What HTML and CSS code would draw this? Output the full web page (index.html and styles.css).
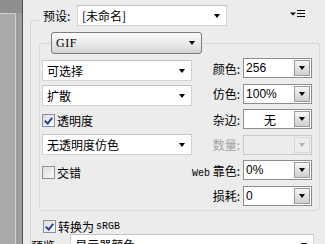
FILE: index.html
```html
<!DOCTYPE html>
<html>

<head>
    <meta charset="utf-8">
    <title>存储为 Web 所用格式</title>

    <link rel="stylesheet" href="styles.css">
</head>

<body>
    <div class="window">
        <div class="preview-strip">
            <div class="strip-top"></div>
            <div class="strip-frame"></div>
        </div>

        <div class="settings">
            <div class="preset-row">
                <span class="preset-label">预设:</span>
                <div class="dropdown preset-box">[未命名]<span class="arrow"></span></div>
                <svg class="menu-icon" width="15" height="7" viewBox="0 0 15 7">
                    <path d="M0 2.5 H6 L3 5.5 Z" fill="#000"/>
                    <rect x="7" y="0" width="8" height="1" fill="#000"/>
                    <rect x="7" y="3" width="8" height="1" fill="#000"/>
                    <rect x="7" y="6" width="8" height="1" fill="#000"/>
                </svg>
            </div>

            <div class="outer-box">
                <div class="format-button"><span class="format-name">GIF</span><span class="arrow"></span></div>

                <div class="inner-box">
                    <!-- left column : reduction, dither, transparency -->
                    <div class="col-left">
                        <div class="dropdown">可选择<span class="arrow"></span></div>
                        <div class="dropdown">扩散<span class="arrow"></span></div>
                        <label class="check-row first-check"><span class="checkbox checked"></span>透明度</label>
                        <div class="dropdown">无透明度仿色<span class="arrow"></span></div>
                        <label class="check-row second-check"><span class="checkbox"></span>交错</label>
                    </div>

                    <!-- right column : labelled combo boxes -->
                    <div class="col-right">
                        <div class="field">
                            <span class="field-label">颜色:</span>
                            <div class="combo"><span class="combo-text">256</span><span class="combo-btn"><span class="arrow"></span></span></div>
                        </div>
                        <div class="field">
                            <span class="field-label">仿色:</span>
                            <div class="combo"><span class="combo-text">100%</span><span class="combo-btn"><span class="arrow"></span></span></div>
                        </div>
                        <div class="field">
                            <span class="field-label">杂边:</span>
                            <div class="combo"><span class="combo-text centered">无</span><span class="combo-btn"><span class="arrow"></span></span></div>
                        </div>
                        <div class="field disabled">
                            <span class="field-label">数量:</span>
                            <div class="combo"><span class="combo-text"></span><span class="combo-btn"><span class="arrow"></span></span></div>
                        </div>
                        <div class="field">
                            <span class="field-label"><span class="mono">Web</span> 靠色:</span>
                            <div class="combo"><span class="combo-text">0%</span><span class="combo-btn"><span class="arrow"></span></span></div>
                        </div>
                        <div class="field">
                            <span class="field-label">损耗:</span>
                            <div class="combo"><span class="combo-text">0</span><span class="combo-btn"><span class="arrow"></span></span></div>
                        </div>
                    </div>
                </div>

                <label class="check-row srgb"><span class="checkbox checked"></span>转换为 <span class="mono">sRGB</span></label>

                <div class="preview-row">
                    <span class="preview-label">预览:</span>
                    <div class="dropdown preview-box">显示器颜色<span class="arrow"></span></div>
                </div>
            </div>
        </div>
    </div>
</body>

</html>
```

FILE: styles.css
```css
body {
    margin: 0;
    background-color: #ececec;
    font-family: "Noto Sans CJK SC", "Noto Sans", sans-serif;
    font-size: 12px;
    color: #000;
    overflow: hidden;
}

.window {
    display: flex;
    height: 244px;
    overflow: hidden;
}

.mono {
    font-family: "Liberation Mono", monospace;
    font-size: 10px;
}

/* grey image strip on the left */
.preview-strip {
    width: 22px;
    border-right: 1px solid #4f4f4f;
    background-color: #9d9d9d;
    display: flex;
    flex-direction: column;
}

.strip-top {
    height: 13px;
    background-color: #8e8e8e;
}

.strip-frame {
    flex: 1;
    width: 15px;
    border-top: 1px solid #d0d0d0;
    border-right: 1px solid #d0d0d0;
    background-color: #a9a9a9;
}

.settings {
    flex: 1;
}

/* small black triangles */
.arrow {
    width: 0;
    height: 0;
    border-left: 3px solid transparent;
    border-right: 3px solid transparent;
    border-top: 4px solid #000;
}

.dropdown {
    box-sizing: border-box;
    height: 21px;
    width: 150px;
    background-color: #fff;
    border: 1px solid #d2d2d2;
    border-top-color: #c4c4c4;
    display: flex;
    align-items: center;
    justify-content: space-between;
    padding: 0 6px 0 4px;
    line-height: 1;
}

/* preset header, sits over the top line of the settings box */
.preset-row {
    position: relative;
    z-index: 1;
    height: 21px;
    margin: 5px 0 0 17px;
    background-color: #ececec;
    display: flex;
    align-items: center;
}

.preset-label {
    padding-left: 3px;
    width: 34px;
}

.menu-icon {
    margin-left: 63px;
    margin-top: -4px;
}

.outer-box {
    margin-top: -6px;
    margin-left: 7px;
    border-top: 1px solid #d6d6d6;
    border-left: 1px solid #d6d6d6;
    border-top-left-radius: 3px;
    height: 224px;
}

/* format legend */
.format-button {
    position: relative;
    z-index: 1;
    box-sizing: border-box;
    width: 151px;
    height: 22px;
    margin: 11px 0 0 20px;
    border: 1px solid #7c7c7c;
    border-radius: 3px;
    background: linear-gradient(#fbfbfb, #e6e6e6 60%, #d2d2d2);
    display: flex;
    align-items: center;
    justify-content: space-between;
    padding: 0 6px 0 4px;
}

.format-name {
    font-family: "Liberation Serif", serif;
    font-size: 12px;
    letter-spacing: 0.5px;
}

.inner-box {
    box-sizing: border-box;
    width: 281px;
    height: 168px;
    margin: -11px 0 0 8px;
    border: 1px solid #d9d9d9;
    border-radius: 3px;
    padding-left: 2px;
    display: flex;
}

.col-left {
    width: 150px;
    padding-top: 16px;
    display: flex;
    flex-direction: column;
    gap: 4px;
}

.check-row {
    display: flex;
    align-items: center;
    gap: 2px;
    height: 19px;
}

.first-check {
    margin-top: 1px;
}

.second-check {
    margin-top: 4px;
}

.checkbox {
    box-sizing: border-box;
    width: 13px;
    height: 13px;
    border: 1px solid #8593a3;
    background: linear-gradient(135deg, #dcdcdc, #fbfbfb);
    position: relative;
}

.checkbox.checked::after {
    content: "";
    position: absolute;
    left: 3px;
    top: 1px;
    width: 3px;
    height: 6px;
    border-right: 2px solid #2a3f9e;
    border-bottom: 2px solid #2a3f9e;
    transform: rotate(40deg);
}

.col-right {
    flex: 1;
    padding-top: 14px;
    padding-right: 7px;
    display: flex;
    flex-direction: column;
    gap: 5.6px;
}

.field {
    height: 20px;
    display: flex;
    align-items: center;
    justify-content: flex-end;
    gap: 3px;
}

.field-label {
    white-space: nowrap;
}

.combo {
    box-sizing: border-box;
    width: 69px;
    height: 20px;
    border: 1px solid #8e8e8e;
    background-color: #fff;
    display: flex;
    align-items: center;
}

.combo-text {
    flex: 1;
    padding-left: 2px;
    font-family: "Liberation Sans", sans-serif;
    font-size: 12px;
}

.combo-text.centered {
    text-align: center;
    font-family: "Noto Sans CJK SC", sans-serif;
}

.combo-btn {
    box-sizing: border-box;
    width: 16px;
    height: 16px;
    margin-right: 1px;
    border: 1px solid #9b9b9b;
    background: linear-gradient(#f6f6f6, #cfcfcf);
    display: flex;
    align-items: center;
    justify-content: center;
}

.field.disabled .field-label {
    color: #a3a3a3;
}

.field.disabled .combo {
    background-color: #ececec;
    border-color: #c2cad4;
}

.field.disabled .combo-btn {
    background: #ececec;
    border-color: #d8d8d8;
}

.field.disabled .arrow {
    border-top-color: #b4b4b4;
}

.srgb {
    margin: 7px 0 0 12px;
    height: 16px;
}

.preview-row {
    display: flex;
    align-items: flex-start;
    margin-top: 0;
    gap: 12px;
}

.preview-label {
    padding-top: 3px;
}

.preview-box {
    width: 244px;
}
```
